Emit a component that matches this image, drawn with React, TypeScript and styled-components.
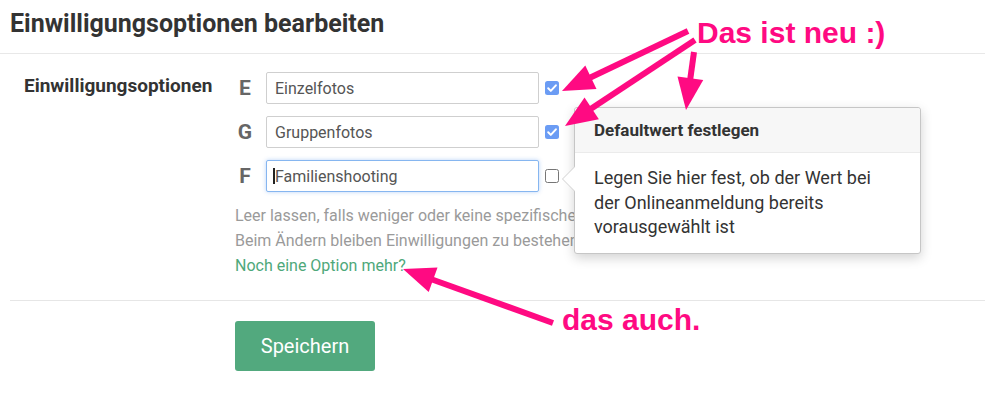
import React from 'react';
import styled, { createGlobalStyle, css } from 'styled-components';

const GlobalStyle = createGlobalStyle`
  html, body {
    margin: 0;
    padding: 0;
    background: #fff;
  }
  body {
    font-family: 'Roboto', 'Noto Sans', sans-serif;
  }
`;

type Option = {
  letter: string;
  value: string;
  checked: boolean;
  focused?: boolean;
};

const options: Option[] = [
  { letter: 'E', value: 'Einzelfotos', checked: true },
  { letter: 'G', value: 'Gruppenfotos', checked: true },
  { letter: 'F', value: 'Familienshooting', checked: false, focused: true },
];

const PINK = '#ff0a82';

// annotation arrows: line start and tip
const arrows = [
  { x1: 688, y1: 31, x2: 562, y2: 91 },
  { x1: 695, y1: 40, x2: 565, y2: 126 },
  { x1: 694, y1: 52, x2: 686, y2: 110 },
  { x1: 553, y1: 323, x2: 403, y2: 269 },
];

const Arrow: React.FC<{ x1: number; y1: number; x2: number; y2: number }> = (p) => {
  const dx = p.x2 - p.x1;
  const dy = p.y2 - p.y1;
  const len = Math.sqrt(dx * dx + dy * dy);
  const ux = dx / len;
  const uy = dy / len;
  const hl = 32;
  const hw = 13;
  const bx = p.x2 - ux * hl;
  const by = p.y2 - uy * hl;
  const px = -uy * hw;
  const py = ux * hw;
  const pts = `${p.x2},${p.y2} ${bx + px},${by + py} ${bx - px},${by - py}`;
  return (
    <g>
      <line
        x1={p.x1}
        y1={p.y1}
        x2={bx + ux * 4}
        y2={by + uy * 4}
        stroke={PINK}
        strokeWidth={6}
      />
      <polygon points={pts} fill={PINK} />
    </g>
  );
};

export default function App() {
  return (
    <Page>
      <GlobalStyle />
      <Header>
        <Title>Einwilligungsoptionen bearbeiten</Title>
      </Header>

      <Form>
        <Label>Einwilligungsoptionen</Label>
        <Controls>
          <Options>
            {options.map((o) => (
              <Row key={o.letter}>
                <Letter>{o.letter}</Letter>
                <Field>
                  <TextInput
                    $focused={!!o.focused}
                    defaultValue={o.value}
                    readOnly
                  />
                  {o.focused && <Caret />}
                </Field>
                <CheckWrap>
                  <CheckBox $checked={o.checked}>
                    {o.checked && (
                      <svg width='14' height='14' viewBox='0 0 14 14'>
                        <path
                          d='M3.2 7.3 L5.8 9.9 L10.9 4.3'
                          fill='none'
                          stroke='#fff'
                          strokeWidth='2'
                          strokeLinecap='round'
                          strokeLinejoin='round'
                        />
                      </svg>
                    )}
                  </CheckBox>
                  {o.focused && (
                    <Popover>
                      <PopoverArrow />
                      <PopoverHead>Defaultwert festlegen</PopoverHead>
                      <PopoverBody>
                        Legen Sie hier fest, ob der Wert bei der Onlineanmeldung bereits
                        vorausgewählt ist
                      </PopoverBody>
                    </Popover>
                  )}
                </CheckWrap>
              </Row>
            ))}
          </Options>
          {/* only the part left of the popover is visible in the screenshot */}
          <Help>
            Leer lassen, falls weniger oder keine spezifische
            <br />
            Beim Ändern bleiben Einwilligungen zu bestehen
          </Help>
          <MoreLink href='#'>Noch eine Option mehr?</MoreLink>
        </Controls>
      </Form>

      <Divider />

      <Actions>
        <SaveButton type='button'>Speichern</SaveButton>
      </Actions>

      <Overlay width='985' height='402' viewBox='0 0 985 402'>
        {arrows.map((a, i) => (
          <Arrow key={i} {...a} />
        ))}
      </Overlay>
      <Note $x={697} $y={13}>Das ist neu :)</Note>
      <Note $x={562} $y={300}>das auch.</Note>
    </Page>
  );
}

const Page = styled.div`
  position: relative;
  width: 985px;
  height: 402px;
  overflow: hidden;
  background: #fff;
  color: #333;
`;

const Header = styled.div`
  padding: 10px 10px 15px;
  border-bottom: 1px solid #e8e8e8;
`;

const Title = styled.h2`
  margin: 0;
  font-size: 25px;
  line-height: 28px;
  font-weight: 700;
  color: #333;
`;

const Form = styled.div`
  display: flex;
  padding: 18px 0 0 24px;
`;

const Label = styled.div`
  width: 211px;
  padding-top: 2px;
  font-size: 19px;
  line-height: 24px;
  font-weight: 700;
  color: #333;
`;

const Controls = styled.div`
  display: flex;
  flex-direction: column;
`;

const Options = styled.div`
  display: flex;
  flex-direction: column;
  gap: 12px;
`;

const Row = styled.div`
  display: flex;
  align-items: center;
  height: 32px;
`;

const Letter = styled.div`
  width: 20px;
  margin-right: 11px;
  text-align: center;
  font-size: 21px;
  font-weight: 700;
  color: #666;
`;

const Field = styled.div`
  position: relative;
`;

const TextInput = styled.input<{ $focused: boolean }>`
  box-sizing: border-box;
  width: 273px;
  height: 32px;
  padding: 0 8px;
  border: 1px solid #cfcfcf;
  border-radius: 2px;
  font-family: 'Roboto', sans-serif;
  font-size: 16px;
  color: #555;
  background: #fff;
  outline: none;

  ${(p) =>
    p.$focused &&
    css`
      border-color: #86b6f0;
      box-shadow: 0 0 4px rgba(102, 160, 240, 0.45);
    `}
`;

const Caret = styled.span`
  position: absolute;
  left: 7px;
  top: 8px;
  width: 2px;
  height: 16px;
  background: #222;
`;

const CheckWrap = styled.div`
  position: relative;
  margin-left: 6px;
  display: flex;
`;

const CheckBox = styled.span<{ $checked: boolean }>`
  box-sizing: border-box;
  display: flex;
  align-items: center;
  justify-content: center;
  width: 14px;
  height: 14px;
  border-radius: 2.5px;
  background: ${(p) => (p.$checked ? '#6b9cf4' : '#fff')};
  border: ${(p) => (p.$checked ? 'none' : '1.5px solid #767676')};
`;

const Popover = styled.div`
  position: absolute;
  left: 29px;
  top: -62px;
  width: 347px;
  box-sizing: border-box;
  background: #fff;
  border: 1px solid #c6c6c6;
  border-radius: 3px;
  box-shadow: 0 4px 12px rgba(0, 0, 0, 0.18);
  z-index: 2;
`;

const PopoverArrow = styled.span`
  position: absolute;
  left: -13px;
  top: 58px;
  width: 0;
  height: 0;
  border-top: 13px solid transparent;
  border-bottom: 13px solid transparent;
  border-right: 13px solid #d0d0d0;

  &::after {
    content: '';
    position: absolute;
    left: 1px;
    top: -12px;
    border-top: 12px solid transparent;
    border-bottom: 12px solid transparent;
    border-right: 12px solid #fff;
  }
`;

const PopoverHead = styled.div`
  padding: 12px 20px 12px 19px;
  background: #f7f7f7;
  border-bottom: 1px solid #ebebeb;
  border-radius: 3px 3px 0 0;
  font-size: 17px;
  line-height: 20px;
  font-weight: 700;
  color: #333;
`;

const PopoverBody = styled.div`
  padding: 13px 20px 13px 19px;
  font-size: 18px;
  line-height: 24.5px;
  color: #333;
`;

const Help = styled.div`
  margin-top: 11px;
  font-size: 16px;
  line-height: 25px;
  color: #9a9a9a;
  white-space: nowrap;
`;

const MoreLink = styled.a`
  font-size: 16px;
  line-height: 25px;
  color: #4ea87a;
  text-decoration: none;
`;

const Divider = styled.div`
  margin: 22px 0 0 10px;
  height: 1px;
  background: #e6e6e6;
`;

const Actions = styled.div`
  padding: 20px 0 0 235px;
`;

const SaveButton = styled.button`
  width: 140px;
  height: 50px;
  border: none;
  border-radius: 3px;
  background: #52a97e;
  color: #fff;
  font-family: 'Roboto', sans-serif;
  font-size: 20px;
  cursor: pointer;
`;

const Overlay = styled.svg`
  position: absolute;
  left: 0;
  top: 0;
  pointer-events: none;
  z-index: 3;
`;

const Note = styled.div<{ $x: number; $y: number }>`
  position: absolute;
  left: ${(p) => p.$x}px;
  top: ${(p) => p.$y}px;
  font-family: 'Liberation Sans', Arial, sans-serif;
  font-size: 30px;
  line-height: 40px;
  font-weight: 700;
  color: ${PINK};
  z-index: 3;
  white-space: nowrap;
`;
